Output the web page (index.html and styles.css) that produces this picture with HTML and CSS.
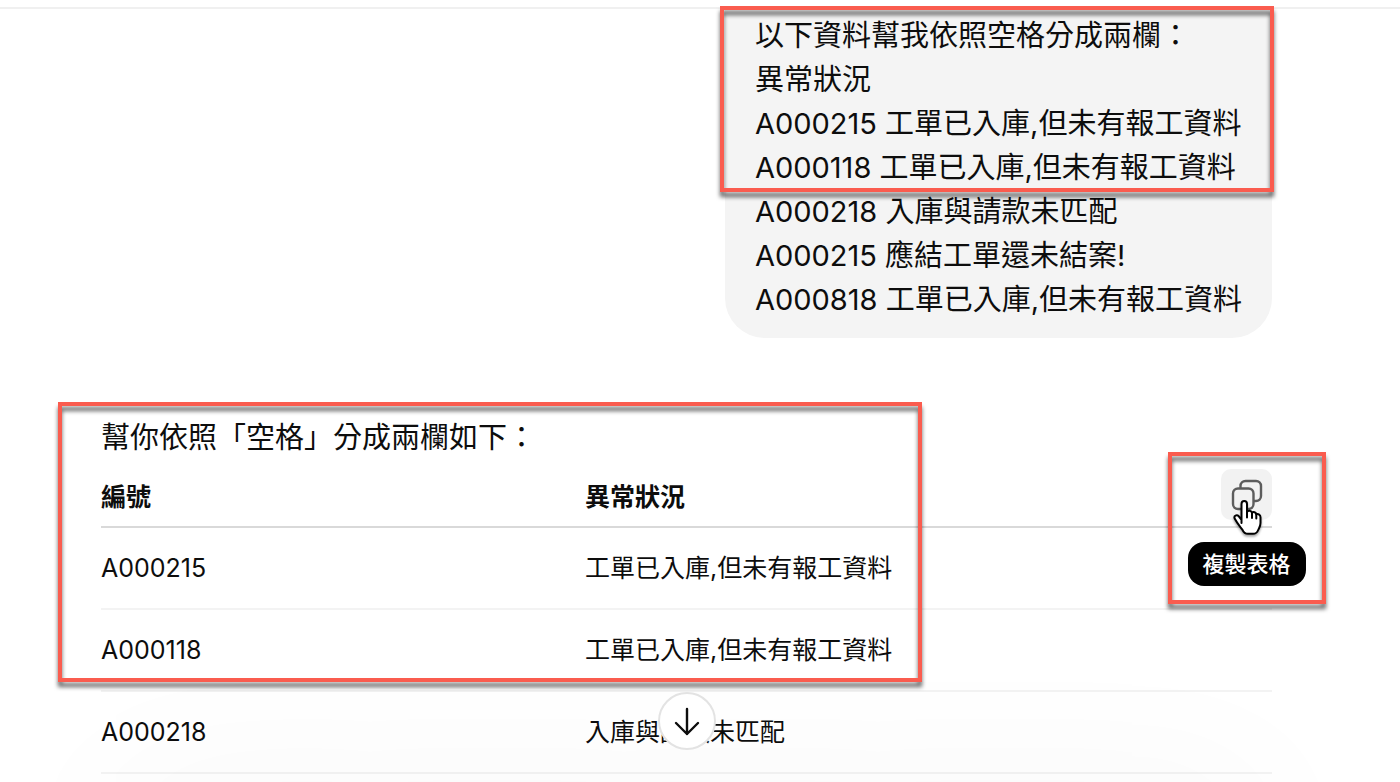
FILE: index.html
```html
<!DOCTYPE html>
<html lang="zh-Hant">
<head>
    <meta charset="UTF-8">
    <meta name="viewport" content="width=device-width, initial-scale=1.0">
    <title>依照空格分成兩欄</title>

    <link rel="stylesheet" href="styles.css">

</head>
<body>
    <header class="header"></header>

    <main class="chat container">
        <article class="question">
            <p class="bubble">以下資料幫我依照空格分成兩欄：<br>
            異常狀況<br>
            A000215 工單已入庫,但未有報工資料<br>
            A000118 工單已入庫,但未有報工資料<br>
            A000218 入庫與請款未匹配<br>
            A000215 應結工單還未結案!<br>
            A000818 工單已入庫,但未有報工資料</p>
            <span class="frame frame-question"></span>
        </article>

        <article class="answer">
            <p class="intro">幫你依照「空格」分成兩欄如下：</p>
            <table class="data">
                <thead>
                    <tr>
                        <th scope="col">編號</th>
                        <th scope="col">異常狀況</th>
                    </tr>
                </thead>
                <tbody>
                    <tr>
                        <td>A000215</td>
                        <td>工單已入庫,但未有報工資料</td>
                    </tr>
                    <tr>
                        <td>A000118</td>
                        <td>工單已入庫,但未有報工資料</td>
                    </tr>
                    <tr>
                        <td>A000218</td>
                        <td>入庫與請款未匹配</td>
                    </tr>
                </tbody>
            </table>

            <div class="copy">
                <button class="copy-button" type="button" aria-labelledby="copy-tip">
                    <svg width="32" height="32" viewBox="0 0 32 32" fill="none" stroke="#5d5d5d" stroke-width="2.4">
                        <path d="M9.500 9.500V7a5 5 0 0 1 5-5H25a5 5 0 0 1 5 5v10a5 5 0 0 1-5 5h-2.500"/>
                        <rect x="2" y="9.500" width="20.500" height="20.500" rx="5"/>
                    </svg>
                </button>
                <span class="tooltip" id="copy-tip" role="tooltip">複製表格</span>
                <svg class="cursor" width="32" height="40" viewBox="0 0 32 40">
                    <path d="M10.500 24V5c0-4 5.500-4 5.500 0v8c1-2 4.500-1.500 5 .8 1.300-1.300 4-.7 4.300 1.500 2-.8 4.200.5 4.200 3V24c0 3.500-1.500 5-2.300 7-.8 2-2 3.800-5.200 3.800h-5c-3 0-4.500-1.500-5.500-4C9.500 28 6.500 25 3.800 19.800c-1.500-3 2-4.500 4-2.500l2.700 3.500z" fill="#fff" stroke="#000" stroke-width="2" stroke-linejoin="round"/>
                    <path d="M16 12.500v6M21 14v5M25.300 15.500v4" fill="none" stroke="#000" stroke-width="2" stroke-linecap="round"/>
                </svg>
            </div>

            <span class="frame frame-answer"></span>
            <span class="frame frame-copy"></span>
        </article>
    </main>

    <div class="composer-shadow"></div>
    <div class="scroll-down">
        <button class="scroll-button" type="button" aria-label="捲動到底部">
            <svg width="32" height="32" viewBox="0 0 32 32" fill="none" stroke="#0d0d0d" stroke-width="2.4" stroke-linecap="round" stroke-linejoin="round">
                <path d="M16 4v25M5 18 16 29l11-11"/>
            </svg>
        </button>
    </div>
</body>
</html>
```
FILE: styles.css
```css
html{
    box-sizing: border-box;
    font-family: Inter, "Noto Sans CJK TC", sans-serif;
    font-size: 29px;
    line-height: 44px;
    color: #0d0d0d;
}

*, *::after, *::before{
    box-sizing: inherit;
}

/* 右側保留捲軸寬度 */
body{
    height: 100vh;
    margin: 0;
    padding-right: 27px;
    overflow: hidden;
    background-color: #fff;
}

p{
    margin: 0;
}

button{
    display: flex;
    justify-content: center;
    align-items: center;
    padding: 0;
    cursor: pointer;
}

.container{
    margin-left: auto;
    margin-right: auto;
    max-width: 1171px;
}

.header{
    height: 9px;
    margin-right: -27px;
    border-bottom: 2px solid #f0f0f0;
}

/* 提問 */
.question{
    position: relative;
    width: fit-content;
    margin-left: auto;
}

.bubble{
    padding: 5px 30px 16px;
    border-radius: 0 0 40px 40px;
    background-color: #f4f4f4;
}

/* 回答 */
.answer{
    position: relative;
    padding-top: 78px;
}

.data{
    width: 100%;
    table-layout: fixed;
    border-spacing: 0;
    font-size: 25px;
    line-height: 36px;
}

.data th, .data td{
    padding: 0;
    text-align: left;
}

.data th{
    height: 68px;
    padding-top: 8px;
    border-bottom: 2px solid #d9d9d9;
    font-weight: 700;
}

.data th:first-child{
    width: 484px;
}

.data td{
    height: 82px;
    border-bottom: 2px solid #f3f3f3;
}

.copy{
    position: absolute;
    top: 131px;
    right: 0;
    width: 51px;
}

.copy-button{
    width: 51px;
    height: 51px;
    border: 0;
    border-radius: 10px;
    background-color: #f2f2f2;
}

.tooltip{
    position: absolute;
    top: 73px;
    left: 50%;
    padding: 0 15px;
    border-radius: 16px;
    background-color: #000;
    color: #fff;
    font-size: 22px;
    font-weight: 500;
    white-space: nowrap;
    transform: translateX(-50%);
}

.cursor{
    position: absolute;
    top: 30px;
    left: 10px;
    filter: drop-shadow(0 2px 1px rgba(0, 0, 0, .35));
}

/* 紅色標示框 */
.frame{
    position: absolute;
    border: 4px solid #fa5c4f;
    filter: drop-shadow(0 5px 2px rgba(0, 0, 0, .6));
    pointer-events: none;
}

.frame-question{
    top: -3px;
    left: -5px;
    right: -2px;
    height: 186px;
}

.frame-answer{
    top: 64px;
    left: -43px;
    width: 864px;
    height: 280px;
}

.frame-copy{
    top: 114px;
    right: -54px;
    width: 158px;
    height: 152px;
}

.composer-shadow{
    position: fixed;
    top: 100%;
    left: 101px;
    right: 128px;
    height: 100px;
    border-radius: 50px;
    box-shadow: 0 0 160px rgba(0, 0, 0, .04);
}

.scroll-down{
    position: fixed;
    left: 0;
    right: 27px;
    bottom: 32px;
    display: flex;
    justify-content: center;
    pointer-events: none;
}

.scroll-button{
    width: 58px;
    height: 58px;
    border: 2px solid #e3e3e3;
    border-radius: 50%;
    background-color: #fff;
    pointer-events: auto;
}
```
